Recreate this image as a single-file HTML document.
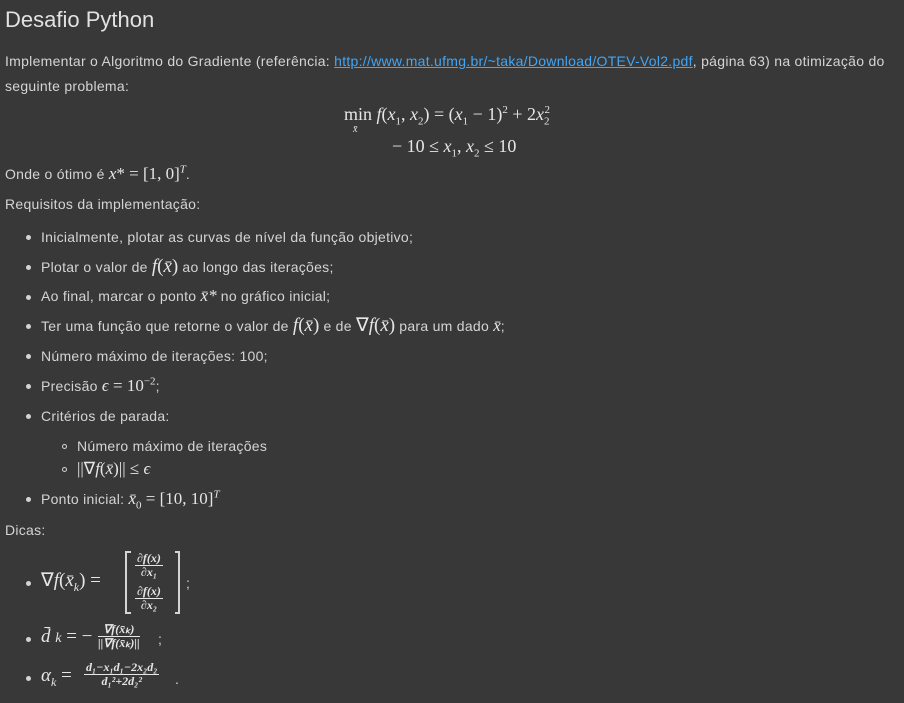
<!DOCTYPE html>
<html><head><meta charset="utf-8"><style>
body{margin:0;background:#383838;width:904px;height:703px;overflow:hidden;font-family:"Liberation Sans",sans-serif;color:#d4d4d4;font-size:14px;letter-spacing:0.28px;position:relative}
.a{position:absolute;white-space:nowrap;line-height:18px}
.m{font-family:"Liberation Serif",serif;font-size:17px;color:#e6e6e6;letter-spacing:0}
.mi{font-family:"Liberation Serif",serif;font-style:italic;font-size:17px;color:#e6e6e6;letter-spacing:0}
sup,sub{line-height:0}
a{color:#42a5f5;text-decoration:underline}
.dot{position:absolute;width:5px;height:5px;border-radius:50%;background:#d4d4d4}
.ring{position:absolute;width:5px;height:5px;border-radius:50%;border:1px solid #d4d4d4;box-sizing:border-box}
.fr{display:inline-block;vertical-align:middle;text-align:center;font-family:"Liberation Serif",serif;font-size:12px;font-style:italic;font-weight:bold;line-height:13px;color:#e6e6e6;letter-spacing:0}
.fr span{display:block}
.fr .n{border-bottom:1px solid #e6e6e6;padding:0 2px}
</style></head><body>
<div class="a" style="left:5px;top:7px;font-size:22px;line-height:26px;color:#e2e2e2;letter-spacing:0">Desafio Python</div>
<div class="a" style="left:5px;top:52px">Implementar o Algoritmo do Gradiente (referência: <a>http://www.mat.ufmg.br/~taka/Download/OTEV-Vol2.pdf</a>, página 63) na otimização do</div>
<div class="a" style="left:5px;top:77px">seguinte problema:</div>
<div class="a m" style="left:344px;top:105px;font-size:18px">min <i>f</i>(<i>x</i><sub style="font-size:11px">1</sub>, <i>x</i><sub style="font-size:11px">2</sub>) = (<i>x</i><sub style="font-size:11px">1</sub> − 1)<sup style="font-size:11px">2</sup> + 2<i>x</i><sub style="font-size:11px">2</sub><sup style="font-size:11px;margin-left:-5px">2</sup></div>
<div class="a mi" style="left:353px;top:121px;font-size:10px">x̄</div>
<div class="a m" style="left:392px;top:137px;font-size:18px">− 10 ≤ <i>x</i><sub style="font-size:11px">1</sub>, <i>x</i><sub style="font-size:11px">2</sub> ≤ 10</div>
<div class="a" style="left:5px;top:165px">Onde o ótimo é <span class="m"><i>x</i>* = [1, 0]<sup style="font-size:11px"><i>T</i></sup></span>.</div>
<div class="a" style="left:5px;top:195px">Requisitos da implementação:</div>

<div class="dot" style="left:26px;top:235px"></div><div class="a" style="left:41px;top:228px">Inicialmente, plotar as curvas de nível da função objetivo;</div>
<div class="dot" style="left:26px;top:265px"></div><div class="a" style="left:41px;top:258px">Plotar o valor de <span class="mi" style="font-size:19px">f</span><span class="m" style="font-size:19px">(<i>x̄</i>)</span> ao longo das iterações;</div>
<div class="dot" style="left:26px;top:295px"></div><div class="a" style="left:41px;top:287px">Ao final, marcar o ponto <span class="mi">x̄*</span> no gráfico inicial;</div>
<div class="dot" style="left:26px;top:324px"></div><div class="a" style="left:41px;top:317px">Ter uma função que retorne o valor de <span class="m" style="font-size:19px"><i>f</i>(<i>x̄</i>)</span> e de <span class="m" style="font-size:19px">∇<i>f</i>(<i>x̄</i>)</span> para um dado <span class="mi">x̄</span>;</div>
<div class="dot" style="left:26px;top:354px"></div><div class="a" style="left:41px;top:347px">Número máximo de iterações: 100;</div>
<div class="dot" style="left:26px;top:384px"></div><div class="a" style="left:41px;top:377px">Precisão <span class="m"><i>ϵ</i> = 10<sup style="font-size:11px">−2</sup></span>;</div>
<div class="dot" style="left:26px;top:414px"></div><div class="a" style="left:41px;top:407px">Critérios de parada:</div>
<div class="ring" style="left:62px;top:444px"></div><div class="a" style="left:77px;top:437px">Número máximo de iterações</div>
<div class="ring" style="left:62px;top:467px"></div><div class="a m" style="left:77px;top:460px">||∇<i>f</i>(<i>x̄</i>)|| ≤ <i>ϵ</i></div>
<div class="dot" style="left:26px;top:497px"></div><div class="a" style="left:41px;top:490px">Ponto inicial: <span class="m"><i>x̄</i><sub style="font-size:11px">0</sub> = [10, 10]<sup style="font-size:11px"><i>T</i></sup></span></div>
<div class="a" style="left:5px;top:521px">Dicas:</div>

<div class="dot" style="left:26px;top:581px"></div>
<div class="a m" style="left:41px;top:572px;font-size:19px">∇<i>f</i>(<i>x̄<sub style="font-size:12px">k</sub></i>) =</div>
<div style="position:absolute;left:125px;top:551px;width:55px;height:63px;border:2px solid #d4d4d4;box-sizing:border-box"></div>
<div style="position:absolute;left:131px;top:549px;width:44px;height:67px;background:#383838"></div>
<div class="fr" style="position:absolute;left:135px;top:552px"><span class="n">∂f(x)</span><span>∂x₁</span></div>
<div class="fr" style="position:absolute;left:135px;top:585px"><span class="n">∂f(x)</span><span>∂x₂</span></div>
<div class="a" style="left:186px;top:574px">;</div>

<div class="dot" style="left:26px;top:637px"></div>
<div class="a m" style="left:41px;top:628px;font-size:19px"><i>d̄</i> <i style="font-size:14px">k</i> = −</div>
<div class="fr" style="position:absolute;left:98px;top:623px"><span class="n">∇f(x̄ₖ)</span><span>||∇f(x̄ₖ)||</span></div>
<div class="a" style="left:158px;top:630px">;</div>

<div class="dot" style="left:26px;top:676px"></div>
<div class="a m" style="left:41px;top:667px;font-size:19px"><i>α<sub style="font-size:12px">k</sub></i> =</div>
<div class="fr" style="position:absolute;left:84px;top:661px"><span class="n">d₁−x₁d₁−2x₂d₂</span><span>d₁²+2d₂²</span></div>
<div class="a" style="left:175px;top:670px">.</div>
</body></html>
